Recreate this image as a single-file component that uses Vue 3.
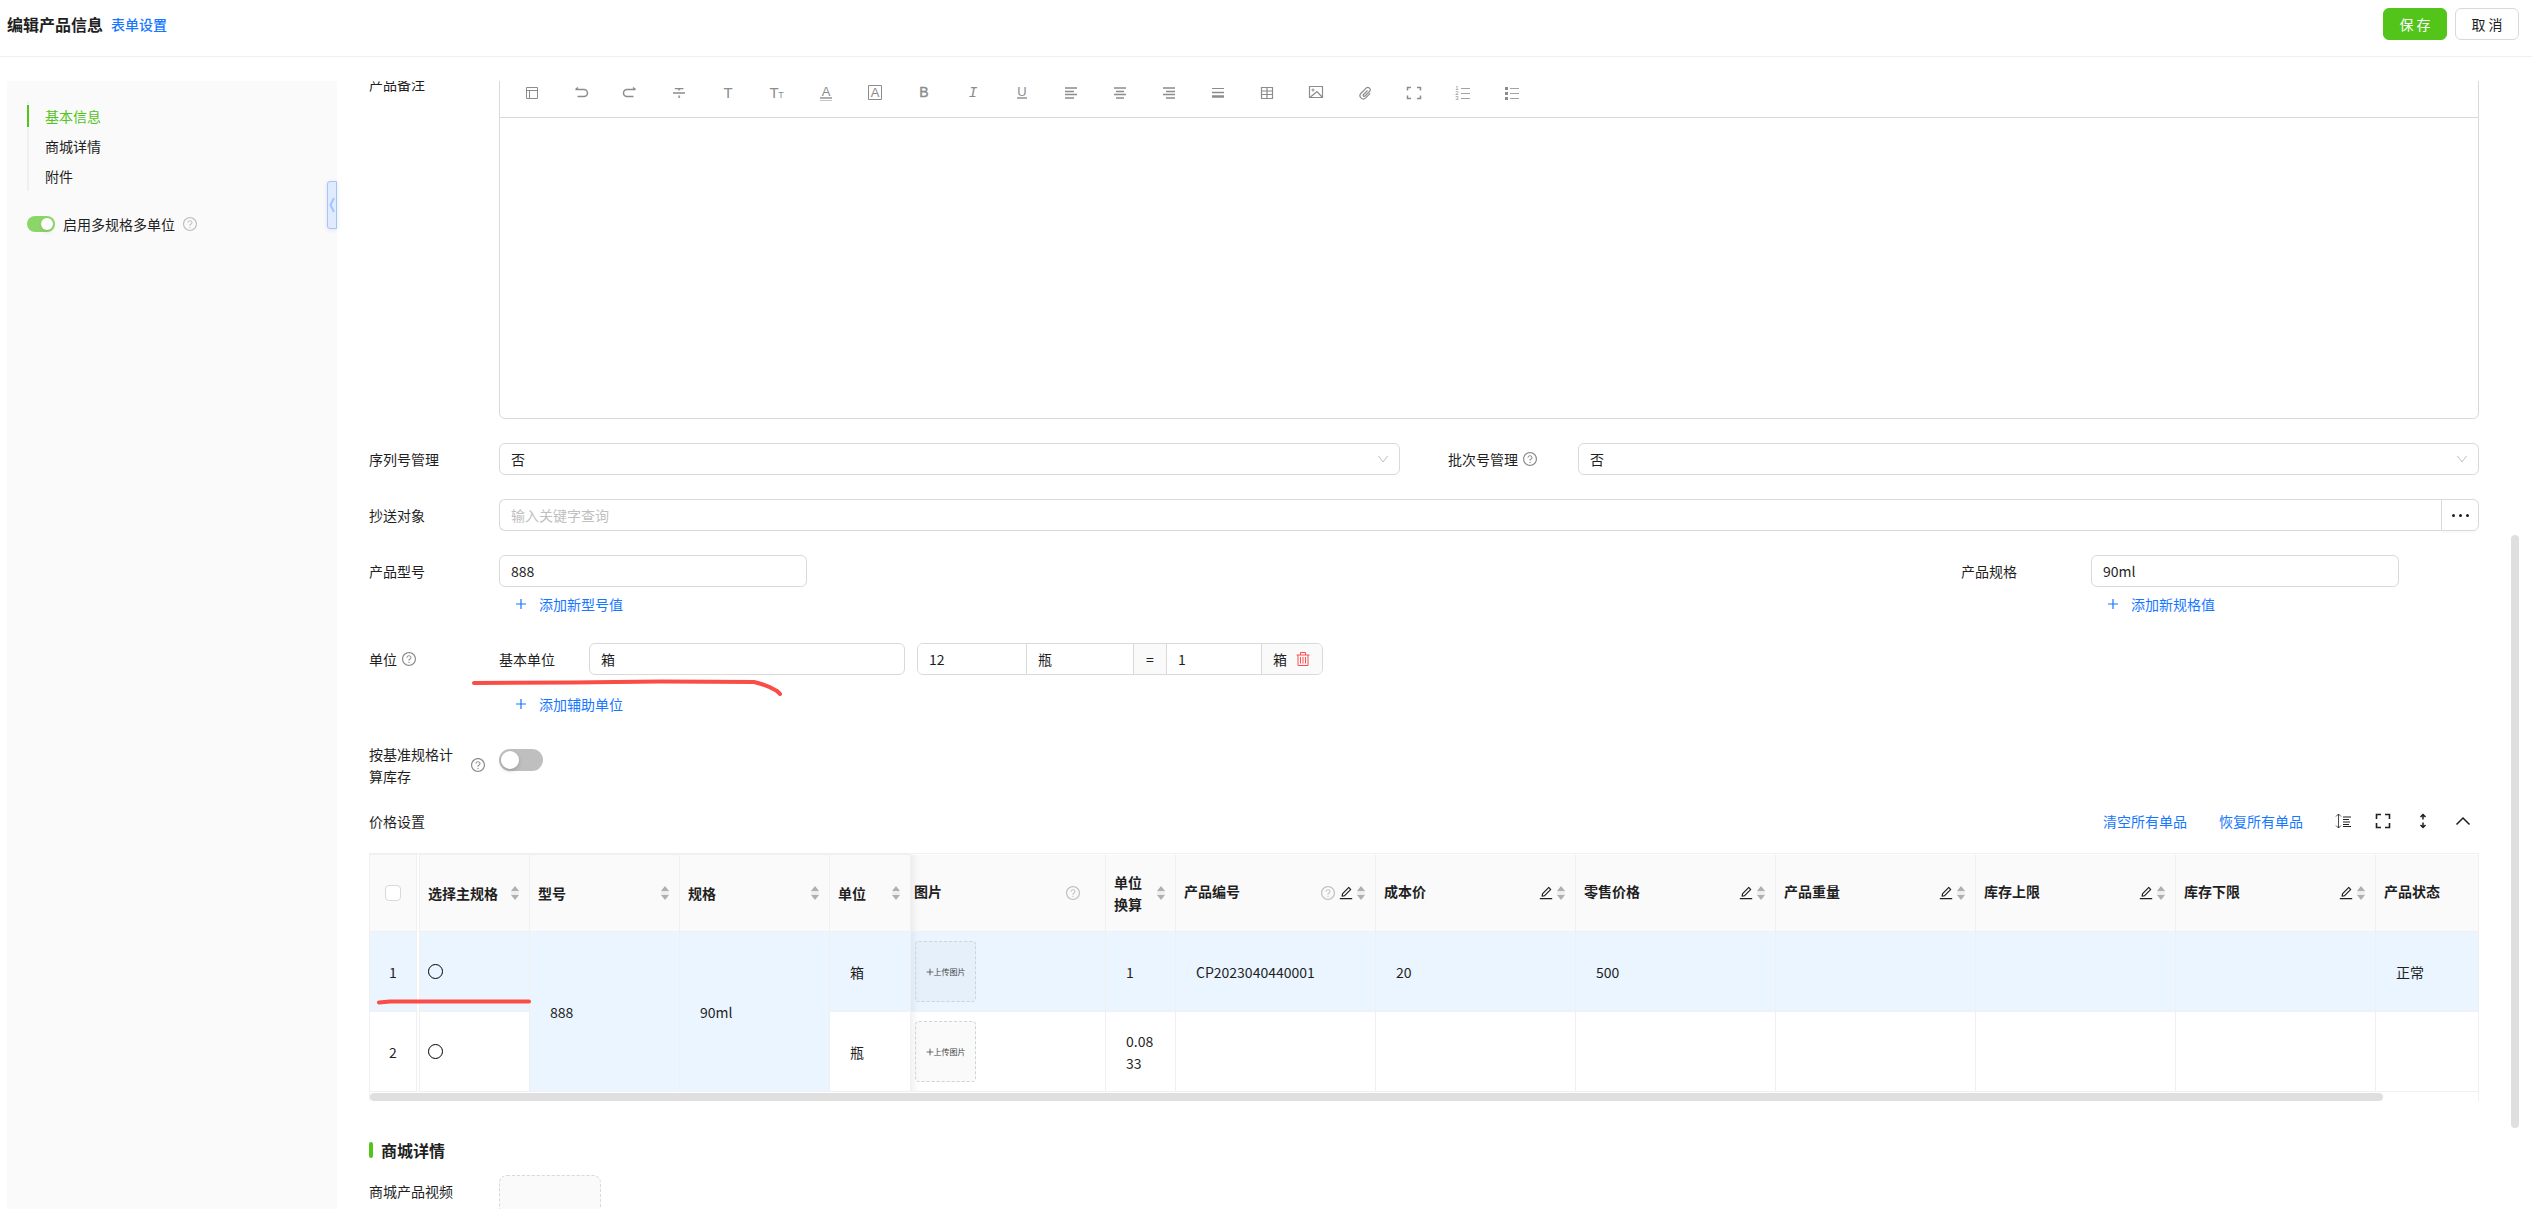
<template>
  <div class="page">
    <!-- icon sprite -->
    <svg class="sprite" aria-hidden="true">
      <symbol id="i-help" viewBox="64 64 896 896">
        <path d="M512 64C264.6 64 64 264.6 64 512s200.6 448 448 448 448-200.6 448-448S759.4 64 512 64zm0 820c-205.4 0-372-166.6-372-372s166.6-372 372-372 372 166.6 372 372-166.6 372-372 372z" />
        <path d="M623.6 316.7C593.6 290.4 554 276 512 276s-81.6 14.5-111.6 40.7C369.2 344 352 380.7 352 420v7.6c0 4.4 3.6 8 8 8h48c4.4 0 8-3.6 8-8V420c0-44.1 43.1-80 96-80s96 35.9 96 80c0 31.1-22 59.6-56.1 72.7-21.2 8.1-39.2 22.3-52.1 40.9-13.1 19-19.9 41.8-19.9 64.9V620c0 4.4 3.6 8 8 8h48c4.4 0 8-3.6 8-8v-22.7a48.3 48.3 0 0130.9-44.8c59-22.7 97.1-74.7 97.1-132.5.1-39.3-17.1-76-48.3-103.3zM472 732a40 40 0 1080 0 40 40 0 10-80 0z" />
      </symbol>
      <symbol id="i-edit" viewBox="64 64 896 896">
        <path d="M257.7 752c2 0 4-.2 6-.5L431.9 722c2-.4 3.9-1.3 5.3-2.8l423.9-423.9a9.96 9.96 0 000-14.1L694.9 114.9c-1.9-1.9-4.4-2.9-7.1-2.9s-5.2 1-7.1 2.9L256.8 538.8c-1.5 1.5-2.4 3.3-2.8 5.3l-29.5 168.2a33.5 33.5 0 009.4 29.8c6.6 6.4 14.9 9.9 23.8 9.9zm67.4-174.4L687.8 215l73.3 73.3-362.7 362.6-88.9 15.7 15.6-89zM880 836H144c-17.7 0-32 14.3-32 32v36c0 4.4 3.6 8 8 8h784c4.4 0 8-3.6 8-8v-36c0-17.7-14.3-32-32-32z" />
      </symbol>
      <symbol id="i-sort" viewBox="0 0 8 16">
        <path d="M4 1l4 5H0zM4 15l4-5H0z" />
        <path d="M0 6.500h8v1H0zM0 8.500h8v1H0z" opacity=".3" />
      </symbol>
      <symbol id="i-plus" viewBox="0 0 12 12"><path d="M6 1v10M1 6h10" fill="none" stroke="currentColor" stroke-width="1.2" /></symbol>
      <symbol id="i-down" viewBox="0 0 12 12"><path d="M1.500 3L6 9l4.500-6" fill="none" stroke="currentColor" /></symbol>
      <symbol id="i-left" viewBox="0 0 6 16"><path d="M5 1L1.500 8 5 15" fill="none" stroke="currentColor" stroke-width="2" /></symbol>
      <symbol id="i-trash" viewBox="0 0 14 16">
        <path d="M.5 4h13M4.500 4V1.500h5V4M2 4v10.500h10V4M4.500 6v6.500M7 6v6.500M9.500 6v6.500" fill="none" stroke="currentColor" />
      </symbol>
      <symbol id="i-density" viewBox="0 0 16 16">
        <path d="M3.500 1v14M1 3.500L3.500 1 6 3.500M1 12.500L3.500 15 6 12.500" fill="none" stroke="currentColor" stroke-width=".8" />
        <path d="M8 4h8M8 6.500h6M8 9h7M8 11.500h6M8 13.500h8" fill="none" stroke="currentColor" />
      </symbol>
      <symbol id="i-full" viewBox="0 0 16 16">
        <path d="M1.500 6V1.500H6M10 1.500h4.500V6M14.500 10v4.500H10M6 14.500H1.500V10" fill="none" stroke="currentColor" stroke-width="1.600" />
      </symbol>
      <symbol id="i-updown" viewBox="0 0 16 16">
        <path d="M8 1v5.500M8 9.500V15M5.500 4L8 1.500 10.500 4M5.500 12L8 14.500l2.500-2.500" fill="none" stroke="currentColor" stroke-width="1.500" />
      </symbol>
      <symbol id="i-up" viewBox="0 0 16 16"><path d="M1.500 11.500L8 5l6.500 6.500" fill="none" stroke="currentColor" stroke-width="1.500" /></symbol>

      <!-- editor toolbar, letters are added by the buttons -->
      <symbol id="e-layout" viewBox="0 0 16 16"><path d="M2.500 2.500h11v11h-11zM2.500 5.500h11M5.500 5.500v8" /></symbol>
      <symbol id="e-undo" viewBox="0 0 16 16"><path d="M2.500 4.500H11a3.500 3.500 0 0 1 0 7H4.500M5 2.500l-2.500 2" stroke-width="1.500" /></symbol>
      <symbol id="e-redo" viewBox="0 0 16 16"><path d="M13.500 4.500H5a3.500 3.500 0 0 0 0 7h6.500M11 2.500l2.500 2" stroke-width="1.500" /></symbol>
      <symbol id="e-strike" viewBox="0 0 16 16">
        <path d="M2 8h12" stroke="#fff" stroke-width="5" /><path d="M2 8h12" stroke-width="2" opacity=".75" />
      </symbol>
      <symbol id="e-color" viewBox="0 0 16 16"><path d="M2 13h12" stroke-width="2" opacity=".7" /><path d="M2 15.500h12" opacity=".5" /></symbol>
      <symbol id="e-bg" viewBox="0 0 16 16"><path d="M1.500 .5h13v14h-13z" /></symbol>
      <symbol id="e-under" viewBox="0 0 16 16"><path d="M3 13h10" stroke-width="2" opacity=".7" /></symbol>
      <symbol id="e-left" viewBox="0 0 16 16"><path d="M2 3h12M2 6.500h9M2 9.500h12M2 13h9" stroke-width="1.300" /></symbol>
      <symbol id="e-center" viewBox="0 0 16 16"><path d="M2 3h12M4 6.500h8M2 9.500h12M4 13h8" stroke-width="1.300" /></symbol>
      <symbol id="e-right" viewBox="0 0 16 16"><path d="M2 3h12M5 6.500h9M2 9.500h12M5 13h9" stroke-width="1.300" /></symbol>
      <symbol id="e-hr" viewBox="0 0 16 16"><path d="M2 3.500h12" /><path d="M2 7.500h12" stroke-width="1.500" /><path d="M2 11.500h12" stroke-width="2.500" /></symbol>
      <symbol id="e-table" viewBox="0 0 16 16"><path d="M2.500 2.500h11v11h-11zM8 2.500v11M2.500 6h11M2.500 9.500h11" stroke-width="1.200" /></symbol>
      <symbol id="e-image" viewBox="0 0 16 16"><path d="M1.500 1.500h13v11h-13zM2.500 12l6.500-5.500 5 5.500" stroke-width="1.200" /><circle cx="5" cy="5" r="1" /></symbol>
      <symbol id="e-clip" viewBox="0 0 16 16"><path d="M10.500 5.500L6.500 9.500a1 1 0 0 0 1.500 1.500l4.500-4.500a2.300 2.300 0 0 0-3.400-3.300L4 8.200a3.300 3.300 0 0 0 4.700 4.700l4.500-4.600" stroke-width="1.200" /></symbol>
      <symbol id="e-full" viewBox="0 0 16 16"><path d="M1.500 5.500v-3h3.500M11 2.500h3.500v3M14.500 10.500v3H11M5 13.500H1.500v-3" stroke-width="1.500" /></symbol>
      <symbol id="e-ol" viewBox="0 0 16 16"><path d="M6 3.500h9M6 8.500h9M6 13.500h9" opacity=".8" /></symbol>
      <symbol id="e-ul" viewBox="0 0 16 16"><path d="M6 3.500h9M6 8.500h9M6 13.500h9" opacity=".8" /><path d="M1 3.500h3M1 8.500h3M1 13.500h3" stroke-width="3" /></symbol>
    </svg>

    <header class="header">
      <h1 class="header__title">编辑产品信息</h1>
      <a class="header__link" href="#">表单设置</a>
      <div class="header__actions">
        <button type="button" class="btn btn--primary">保 存</button>
        <button type="button" class="btn">取 消</button>
      </div>
    </header>

    <div class="body">
      <aside class="side">
        <nav class="anchor">
          <a
            v-for="(a, i) in anchors"
            :key="a"
            href="#"
            class="anchor__item"
            :class="{ 'anchor__item--active': i === 0 }"
          >{{ a }}</a>
        </nav>
        <div class="side__switch">
          <input id="multi" v-model="multiSpec" type="checkbox" role="switch" class="switch switch--small" disabled />
          <label for="multi">启用多规格多单位</label>
          <svg class="icon14 muted"><use href="#i-help" /></svg>
        </div>
        <button type="button" class="side__fold" aria-label="收起"><svg><use href="#i-left" /></svg></button>
      </aside>

      <main class="main">
        <form class="form" @submit.prevent>
          <div class="row">
            <span class="label">产品备注</span>
            <div class="editor">
              <div class="editor__bar">
                <button v-for="t in tools" :key="t.id" type="button" class="editor__btn" :aria-label="t.id">
                  <svg viewBox="0 0 16 16">
                    <text
                      v-for="(g, i) in t.glyphs"
                      :key="i"
                      :x="g.x"
                      :y="g.y"
                      class="glyph"
                      :class="g.kind"
                    >{{ g.text }}</text>
                    <use :href="'#e-' + t.id" />
                  </svg>
                </button>
              </div>
              <div class="editor__area" contenteditable="true"></div>
            </div>
          </div>

          <div class="pair">
            <div class="row">
              <label class="label" for="serial">序列号管理</label>
              <div class="select">
                <select id="serial"><option>否</option><option>是</option></select>
                <svg><use href="#i-down" /></svg>
              </div>
            </div>
            <div class="row">
              <label class="label" for="batch">批次号管理<svg class="icon14"><use href="#i-help" /></svg></label>
              <div class="select">
                <select id="batch"><option>否</option><option>是</option></select>
                <svg><use href="#i-down" /></svg>
              </div>
            </div>
          </div>

          <div class="row">
            <label class="label" for="cc">抄送对象</label>
            <div class="search">
              <input id="cc" class="input" placeholder="输入关键字查询" />
              <button type="button" class="search__more" aria-label="更多"><i></i><i></i><i></i></button>
            </div>
          </div>

          <div class="specs">
            <div class="row row--spec">
              <label class="label" for="model">产品型号</label>
              <div>
                <input id="model" v-model="model" class="input input--spec" />
                <button type="button" class="add"><svg><use href="#i-plus" /></svg>添加新型号值</button>
              </div>
            </div>
            <div class="row row--spec">
              <label class="label" for="spec">产品规格</label>
              <div>
                <input id="spec" v-model="spec" class="input input--spec" />
                <button type="button" class="add"><svg><use href="#i-plus" /></svg>添加新规格值</button>
              </div>
            </div>
          </div>

          <div class="row row--units">
            <span class="label">单位<svg class="icon14"><use href="#i-help" /></svg></span>
            <div>
              <div class="units">
                <label class="units__label" for="base">基本单位</label>
                <input id="base" v-model="baseUnit" class="input units__base" />
                <div class="group">
                  <input v-model="unit.count" class="group__count" aria-label="数量" />
                  <input v-model="unit.name" class="group__name" aria-label="辅助单位" />
                  <span class="group__eq">=</span>
                  <input v-model="unit.base" class="group__rate" aria-label="换算" />
                  <span class="group__tail">
                    箱
                    <button type="button" aria-label="删除"><svg><use href="#i-trash" /></svg></button>
                  </span>
                </div>
              </div>
              <button type="button" class="add add--unit"><svg><use href="#i-plus" /></svg>添加辅助单位</button>
            </div>
            <svg class="mark mark--unit" viewBox="0 0 312 20" aria-hidden="true">
              <path d="M3 7L100 6.500 190 5.500 283 6Q296 9 306 15L309 18" />
            </svg>
          </div>

          <div class="row row--stock">
            <label class="label label--wrap" for="stock">
              <span>按基准规格计算库存</span>
              <svg class="icon14"><use href="#i-help" /></svg>
            </label>
            <input id="stock" v-model="byBase" type="checkbox" role="switch" class="switch" />
          </div>

          <div class="price">
            <span>价格设置</span>
            <div class="price__tools">
              <a href="#">清空所有单品</a>
              <a href="#">恢复所有单品</a>
              <div class="price__icons">
                <button v-for="t in ['density', 'full', 'updown', 'up']" :key="t" type="button" :aria-label="t">
                  <svg><use :href="'#i-' + t" /></svg>
                </button>
              </div>
            </div>
          </div>

          <div class="grid">
            <table>
              <colgroup>
                <col v-for="(c, i) in widths" :key="i" :style="c ? { width: c + 'px' } : null" />
              </colgroup>
              <thead>
                <tr>
                  <th class="pin center"><input type="checkbox" class="check" aria-label="全选" /></th>
                  <th v-for="c in columns" :key="c.title" :class="{ pin: c.pin, shade: c.shade }">
                    <div class="th">
                      <span class="th__text" :class="{ 'th__text--narrow': c.narrow }">{{ c.title }}</span>
                      <svg v-if="c.help" class="icon14 muted"><use href="#i-help" /></svg>
                      <svg v-if="c.edit" class="icon14 dark"><use href="#i-edit" /></svg>
                      <svg v-if="c.sort" class="th__sort"><use href="#i-sort" /></svg>
                    </div>
                  </th>
                </tr>
              </thead>
              <tbody>
                <tr v-for="(r, i) in rows" :key="i" :class="{ active: i === 0 }">
                  <td class="center">{{ i + 1 }}</td>
                  <td class="tight"><input type="radio" name="main" class="radio" aria-label="选择主规格" /></td>
                  <td v-if="i === 0" rowspan="2">888</td>
                  <td v-if="i === 0" rowspan="2">90ml</td>
                  <td>{{ r.unit }}</td>
                  <td class="shade upload-cell">
                    <button type="button" class="upload"><svg><use href="#i-plus" /></svg>上传图片</button>
                  </td>
                  <td class="break">{{ r.rate }}</td>
                  <td v-for="(v, k) in r.values" :key="k">{{ v }}</td>
                </tr>
              </tbody>
            </table>
            <div class="grid__scroll"><div></div></div>
            <svg class="mark mark--row" viewBox="0 0 156 8" aria-hidden="true"><path d="M3 4.500L14 3.500H153" /></svg>
          </div>

          <h2 class="section">商城详情</h2>
          <div class="row row--video">
            <span class="label">商城产品视频</span>
            <button type="button" class="video" aria-label="上传视频"></button>
          </div>
        </form>
      </main>
      <div class="scrollbar"></div>
    </div>
  </div>
</template>

<script setup>
import { ref, reactive } from 'vue'

const anchors = ['基本信息', '商城详情', '附件']
const multiSpec = ref(true)
const byBase = ref(false)
const model = ref('888')
const spec = ref('90ml')
const baseUnit = ref('箱')
const unit = reactive({ count: '12', name: '瓶', base: '1' })

const tools = [
  { id: 'layout' },
  { id: 'undo' },
  { id: 'redo' },
  { id: 'strike', glyphs: [{ text: 'T', x: 8, y: 13 }] },
  { id: 'text', glyphs: [{ text: 'T', x: 8, y: 13 }] },
  { id: 'size', glyphs: [{ text: 'T', x: 5, y: 13 }, { text: 'T', x: 12, y: 13, kind: 'glyph--small' }] },
  { id: 'color', glyphs: [{ text: 'A', x: 8, y: 11, kind: 'glyph--mid' }] },
  { id: 'bg', glyphs: [{ text: 'A', x: 8, y: 12, kind: 'glyph--mid' }] },
  { id: 'bold', glyphs: [{ text: 'B', x: 8, y: 12, kind: 'glyph--bold' }] },
  { id: 'italic', glyphs: [{ text: 'I', x: 8, y: 12, kind: 'glyph--italic' }] },
  { id: 'under', glyphs: [{ text: 'U', x: 8, y: 11, kind: 'glyph--mid' }] },
  { id: 'left' },
  { id: 'center' },
  { id: 'right' },
  { id: 'hr' },
  { id: 'table' },
  { id: 'image' },
  { id: 'clip' },
  { id: 'full' },
  {
    id: 'ol',
    glyphs: [1, 2, 3].map((n) => ({ text: n, x: 2, y: n * 5, kind: 'glyph--digit' })),
  },
  { id: 'ul' },
]

// last column takes what is left
const widths = [50, 110, 150, 150, 81, 195, 70, 200, 200, 200, 200, 200, 200, 0]

const columns = [
  { title: '选择主规格', pin: true, sort: true },
  { title: '型号', pin: true, sort: true },
  { title: '规格', pin: true, sort: true },
  { title: '单位', pin: true, sort: true },
  { title: '图片', shade: true, help: true },
  { title: '单位换算', sort: true, narrow: true },
  { title: '产品编号', help: true, edit: true, sort: true },
  { title: '成本价', edit: true, sort: true },
  { title: '零售价格', edit: true, sort: true },
  { title: '产品重量', edit: true, sort: true },
  { title: '库存上限', edit: true, sort: true },
  { title: '库存下限', edit: true, sort: true },
  { title: '产品状态' },
]

const rows = [
  { unit: '箱', rate: '1', values: ['CP2023040440001', '20', '500', '', '', '', '正常'] },
  { unit: '瓶', rate: '0.0833', values: ['', '', '', '', '', '', ''] },
]
</script>

<style>
body {
  margin: 0;
  background: #fff;
}
</style>

<style scoped>
.page {
  display: flex;
  flex-direction: column;
  height: 100vh;
  overflow: hidden;
  color: #1f1f1f;
  font: 14px/22px "Noto Sans CJK SC", sans-serif;
}

.page *,
.page *::before {
  box-sizing: border-box;
}

button,
input,
select {
  font: inherit;
  color: inherit;
  margin: 0;
}

button {
  padding: 0;
  border: 0;
  background: none;
  cursor: pointer;
}

a {
  color: #1677ff;
  text-decoration: none;
}

svg {
  fill: currentColor;
}

.sprite {
  position: absolute;
  width: 0;
  height: 0;
}

.icon14 {
  flex: none;
  width: 14px;
  height: 14px;
  color: #8c8c8c;
}

.muted {
  color: #bfbfbf;
}

.dark {
  color: #1f1f1f;
}

/* header */
.header {
  display: flex;
  flex: none;
  align-items: center;
  height: 57px;
  padding: 0 13px 8px 7px;
  border-bottom: 1px solid #f0f0f0;
}

.header__title {
  margin: 0 8px 0 0;
  font-size: 16px;
  font-weight: 600;
}

.header__link {
  font-weight: 500;
}

.header__actions {
  display: flex;
  gap: 8px;
  margin-left: auto;
}

.btn {
  width: 64px;
  height: 32px;
  border: 1px solid #d9d9d9;
  border-radius: 6px;
  background: #fff;
}

.btn--primary {
  border-color: #52c41a;
  background: #52c41a;
  color: #fff;
}

/* sidebar */
.body {
  position: relative;
  display: flex;
  flex: 1;
  gap: 32px;
  min-height: 0;
  padding: 24px 53px 0 7px;
}

.side {
  position: relative;
  flex: 0 0 330px;
  padding: 20px;
  background: #fafafa;
}

.anchor {
  display: flex;
  flex-direction: column;
  gap: 8px;
  padding: 4px 0;
  border-left: 2px solid #f0f0f0;
}

.anchor__item {
  margin-left: -2px;
  padding-left: 16px;
  border-left: 2px solid transparent;
  color: inherit;
}

.anchor__item--active {
  border-color: #52c41a;
  color: #52c41a;
}

.side__switch {
  display: flex;
  align-items: center;
  gap: 8px;
  margin-top: 22px;
}

.side__fold {
  position: absolute;
  top: 100px;
  right: 0;
  display: flex;
  align-items: center;
  justify-content: center;
  width: 10px;
  height: 48px;
  border: 1px solid #a3c4ff;
  border-radius: 3px 0 0 3px;
  background: #e0ebff;
  color: #a3c4ff;
  box-shadow: 0 1px 4px rgba(0, 0, 0, 0.1);
}

.side__fold svg {
  width: 6px;
  height: 16px;
}

.switch {
  appearance: none;
  flex: none;
  width: 44px;
  height: 22px;
  padding: 2px;
  border-radius: 11px;
  background: #bfbfbf;
}

.switch::before {
  content: "";
  display: block;
  width: 18px;
  height: 18px;
  border-radius: 50%;
  background: #fff;
  box-shadow: 0 2px 4px rgba(0, 35, 11, 0.2);
}

.switch:checked {
  background: #52c41a;
}

.switch:checked::before {
  margin-left: auto;
}

.switch:disabled {
  opacity: 0.65;
}

.switch--small {
  width: 28px;
  height: 16px;
}

.switch--small::before {
  width: 12px;
  height: 12px;
}

/* form */
.main {
  flex: 1;
  min-width: 0;
  overflow: hidden;
}

/* the pane is scrolled a little into the first field */
.form {
  display: flex;
  flex-direction: column;
  gap: 24px;
  margin-top: -13px;
}

.form > * {
  flex: none;
}

.row {
  display: grid;
  grid-template-columns: 130px minmax(0, 1fr);
  align-items: start;
}

.pair {
  display: grid;
  grid-template-columns: 1fr 1fr;
  gap: 48px;
}

.specs {
  display: flex;
  justify-content: space-between;
}

.row--spec {
  padding-right: 80px;
}

.label {
  display: flex;
  align-items: center;
  gap: 5px;
  line-height: 32px;
}

.label--wrap {
  justify-content: space-between;
  padding-right: 14px;
  line-height: 22px;
}

.label--wrap span {
  width: 88px;
}

.editor {
  border: 1px solid #d9d9d9;
  border-radius: 6px;
}

.editor__bar {
  display: flex;
  height: 49px;
  padding: 0 7px;
  border-bottom: 1px solid #d9d9d9;
}

.editor__btn {
  display: flex;
  flex: 0 0 49px;
  align-items: center;
  justify-content: center;
}

.editor__btn svg {
  width: 16px;
  height: 16px;
  overflow: visible;
  color: #8c8c8c;
  fill: none;
  stroke: #8c8c8c;
}

.glyph {
  fill: #8c8c8c;
  stroke: none;
  font: 15px "Liberation Sans", sans-serif;
  text-anchor: middle;
}

.glyph--mid {
  font-size: 13px;
}

.glyph--bold {
  font-size: 14px;
  stroke: #8c8c8c;
  stroke-width: 0.4;
}

.glyph--italic {
  font: italic 15px "Liberation Mono", monospace;
}

.glyph--small {
  font-size: 9px;
}

.glyph--digit {
  font-size: 6px;
}

.editor__area {
  height: 300px;
  outline: none;
}

.input {
  display: block;
  width: 100%;
  height: 32px;
  padding: 0 11px;
  border: 1px solid #d9d9d9;
  border-radius: 6px;
  background: #fff;
}

.input::placeholder {
  color: #bfbfbf;
}

.input--spec {
  width: 308px;
}

.select {
  display: grid;
  align-items: center;
}

.select select,
.select svg {
  grid-area: 1 / 1;
}

.select select {
  appearance: none;
  width: 100%;
  height: 32px;
  padding: 0 11px;
  border: 1px solid #d9d9d9;
  border-radius: 6px;
  background: #fff;
}

.select svg {
  justify-self: end;
  width: 12px;
  height: 12px;
  margin-right: 11px;
  color: #bfbfbf;
  pointer-events: none;
}

.search {
  display: flex;
}

.search .input {
  border-radius: 6px 0 0 6px;
  border-right: 0;
}

.search__more {
  display: flex;
  flex: 0 0 38px;
  align-items: center;
  justify-content: center;
  gap: 4px;
  border: 1px solid #d9d9d9;
  border-radius: 0 6px 6px 0;
  box-shadow: 0 2px 0 rgba(0, 0, 0, 0.02);
}

.search__more i {
  width: 3px;
  height: 3px;
  border-radius: 50%;
  background: #1f1f1f;
}

.add {
  display: flex;
  align-items: center;
  gap: 12px;
  height: 30px;
  margin-top: 2px;
  padding: 0 16px;
  color: #1677ff;
}

.add svg {
  width: 12px;
  height: 12px;
}

.add--unit {
  margin-top: 14px;
}

.row--units {
  position: relative;
}

.units {
  display: flex;
  align-items: center;
}

.units__label {
  flex: 0 0 90px;
}

.units__base {
  flex: 0 0 316px;
  margin-right: 12px;
}

.group {
  display: flex;
  height: 32px;
  overflow: hidden;
  border: 1px solid #d9d9d9;
  border-radius: 6px;
}

.group > * {
  border: 0;
  border-left: 1px solid #d9d9d9;
}

.group > :first-child {
  border-left: 0;
}

.group input {
  padding: 0 11px;
}

.group__count {
  width: 108px;
}

.group__name {
  width: 107px;
}

.group__eq {
  width: 33px;
  background: #fafafa;
  line-height: 30px;
  text-align: center;
}

.group__rate {
  width: 95px;
}

.group__tail {
  display: flex;
  align-items: center;
  gap: 9px;
  width: 61px;
  padding-left: 11px;
  background: #fafafa;
}

.group__tail button,
.group__tail svg {
  display: block;
  width: 14px;
  height: 16px;
  color: #ff4d4f;
}

.mark {
  position: absolute;
  fill: none;
  stroke: #fa4d48;
  stroke-width: 4;
  stroke-linecap: round;
  stroke-linejoin: round;
  pointer-events: none;
}

.mark--unit {
  top: 33px;
  left: 102px;
  width: 312px;
  height: 20px;
}

.mark--row {
  top: 144px;
  left: 6px;
  width: 156px;
  height: 8px;
}

.row--stock .switch {
  margin-top: 6px;
}

/* price table */
.price {
  display: flex;
  justify-content: space-between;
  line-height: 20px;
}

.price__tools {
  display: flex;
  gap: 32px;
  padding-right: 8px;
}

.price__icons {
  display: flex;
  align-items: center;
  gap: 24px;
}

.price__icons button,
.price__icons svg {
  display: block;
  width: 16px;
  height: 16px;
}

.grid {
  position: relative;
  margin-top: -2px;
  border: 1px solid #f0f0f0;
  border-bottom: 0;
}

table {
  width: 100%;
  table-layout: fixed;
  border-collapse: separate;
  border-spacing: 0;
}

th {
  height: 78px;
  padding: 0 10px 0 8px;
  border-top: 1px solid #fff;
  border-right: 1px solid #f0f0f0;
  border-bottom: 1px solid #f0f0f0;
  background: #fafafa;
  font-weight: 600;
  text-align: left;
}

th.pin {
  border-top-color: #f0f0f0;
}

td {
  height: 80px;
  padding: 0 20px;
  border-right: 1px solid #f0f0f0;
  border-bottom: 1px solid #f0f0f0;
}

tr > :last-child {
  border-right: 0;
}

/* fixed column is set apart by a doubled rule */
th.center,
td.center {
  padding: 0;
  border-right: 4px double #f0f0f0;
  background-clip: padding-box;
  text-align: center;
}

.active td {
  background-color: #eaf5ff;
}

td.tight {
  padding: 0 8px;
}

th.shade {
  padding: 0 25px 0 3px;
}

.shade {
  box-shadow: inset 10px 0 8px -8px rgba(5, 5, 5, 0.08);
}

td.upload-cell {
  padding: 0 4px;
}

td.break {
  word-break: break-all;
}

.th {
  display: flex;
  align-items: center;
  gap: 4px;
}

.th__text {
  flex: 1;
  white-space: nowrap;
}

th:not(.pin) .th__text {
  padding-bottom: 4px;
}

th:not(.pin) .th__text--narrow {
  padding: 0 8px 0 0;
  white-space: normal;
}

.th__sort {
  flex: none;
  width: 8px;
  height: 16px;
  color: #b0b0b0;
}

.check {
  appearance: none;
  display: block;
  width: 16px;
  height: 16px;
  margin: 0 auto;
  border: 1px solid #d9d9d9;
  border-radius: 4px;
  background: #fff;
}

.radio {
  appearance: none;
  display: block;
  width: 15px;
  height: 15px;
  border: 1px solid #000;
  border-radius: 50%;
}

.upload {
  display: flex;
  align-items: center;
  justify-content: center;
  width: 61px;
  height: 61px;
  border: 1px dashed #d0d3d6;
  border-radius: 4px;
  background: rgba(0, 0, 0, 0.02);
  color: #444;
  font-size: 8px;
}

.upload svg {
  width: 8px;
  height: 8px;
}

.grid__scroll {
  padding-top: 1px;
}

.grid__scroll div {
  width: 95%;
  height: 8px;
  min-width: calc(100% - 95px);
  border-radius: 4px;
  background: #dfdfdf;
}

.section {
  display: flex;
  align-items: center;
  gap: 8px;
  margin: 13px 0 0;
  font-size: 16px;
  font-weight: 600;
  line-height: 24px;
}

.section::before {
  content: "";
  width: 4px;
  height: 16px;
  border-radius: 2px;
  background: #52c41a;
}

.row--video {
  margin-top: -11px;
}

.video {
  width: 102px;
  height: 102px;
  border: 1px dashed #d9d9d9;
  border-radius: 8px;
  background: #fafafa;
}

.scrollbar {
  position: absolute;
  top: 41.5%;
  right: 13px;
  width: 8px;
  height: 51.5%;
  border-radius: 4px;
  background: #dfdfdf;
}
</style>
